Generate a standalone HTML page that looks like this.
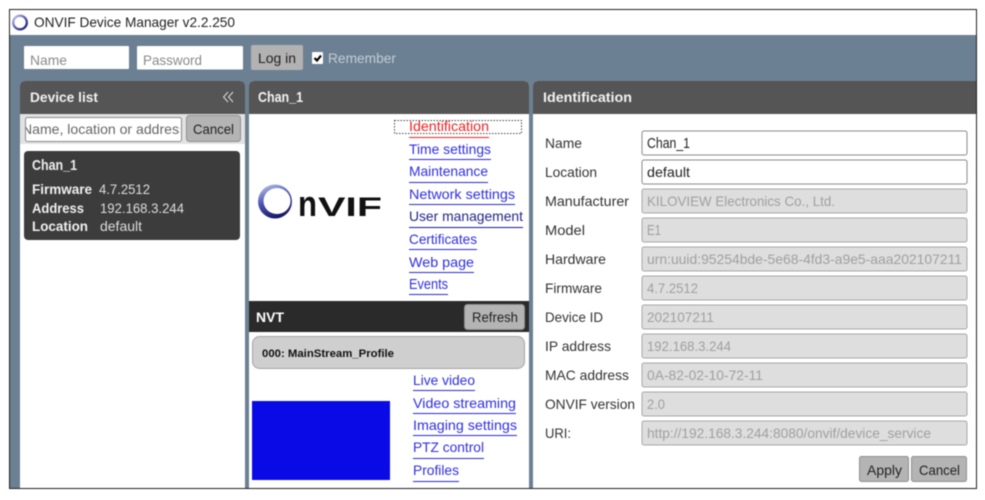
<!DOCTYPE html>
<html><head><meta charset="utf-8"><title>ONVIF Device Manager</title>
<style>
html,body{margin:0;padding:0;background:#fff;width:985px;height:500px;overflow:hidden}
svg{display:block;position:absolute;left:0;top:0;filter:blur(.45px)}
text{font-family:"Liberation Sans",sans-serif;font-size:14px;white-space:pre}
.b{font-weight:bold}
.lk{fill:#2f2fe0}
.lb{fill:#333}
.v{fill:#a0a0a0}
.in{fill:#fff;stroke:#8a8a8a}
.dis{fill:#dedede;stroke:#a8a8a8}
.btn{fill:#b4b4b4;stroke:#8f8f8f}
</style></head><body>
<svg width="985" height="500" viewBox="0 0 985 500" xmlns="http://www.w3.org/2000/svg">
<defs>
<linearGradient id="ring" x1="0" y1="0" x2="1" y2="1"><stop offset="0" stop-color="#c9cde8"/><stop offset=".5" stop-color="#5a5fb0"/><stop offset="1" stop-color="#1a1a70"/></linearGradient>
<linearGradient id="logo" x1=".2" y1="0" x2=".6" y2="1"><stop offset="0" stop-color="#b9bfe6"/><stop offset=".45" stop-color="#4a55b5"/><stop offset="1" stop-color="#14145e"/></linearGradient>
<clipPath id="ph"><rect x="26" y="118" width="154" height="23"/></clipPath>
</defs>
<rect width="985" height="500" fill="#fff"/>
<rect x="9.5" y="9.5" width="967" height="479" fill="#fff" stroke="#222"/>
<rect x="10" y="35" width="967" height="453" fill="#6c8093"/>
<circle cx="20" cy="22.5" r="6.8" fill="#fff" stroke="url(#ring)" stroke-width="2.4"/>
<text x="34" y="27" textLength="201" lengthAdjust="spacingAndGlyphs" fill="#222">ONVIF Device Manager v2.2.250</text>

<rect x="24" y="46" width="105" height="23" fill="#fff" rx="1"/>
<rect x="137" y="46" width="106" height="23.500" fill="#fff" rx="1"/>
<text x="30" y="65" textLength="37" lengthAdjust="spacingAndGlyphs" fill="#8a8a8a">Name</text>
<text x="143" y="65" textLength="59" lengthAdjust="spacingAndGlyphs" fill="#8a8a8a">Password</text>
<rect x="251" y="45" width="52" height="25" rx="2" fill="#b2b2b2"/>
<text x="258" y="63" textLength="38" lengthAdjust="spacingAndGlyphs" fill="#222">Log in</text>
<rect x="312" y="52" width="11" height="12" rx="1" fill="#fff"/>
<path d="M314.500 58l2.500 2.500 4-5" fill="none" stroke="#000" stroke-width="2.200"/>
<text x="328" y="63" textLength="68" lengthAdjust="spacingAndGlyphs" fill="#c3ccd4">Remember</text>

<!-- device list -->
<path d="M20 488V86q0-5 5-5h215q5 0 5 5v402z" fill="#fff"/>
<path d="M20 114V86q0-5 5-5h215q5 0 5 5v28z" fill="#555"/>
<rect x="20" y="114" width="225" height="30" fill="#e2e2e2"/>
<text x="30" y="102" class="b" textLength="68" lengthAdjust="spacingAndGlyphs" fill="#f2f2f2">Device list</text>
<path d="M228 92l-4.500 5 4.500 5M233 92l-4.500 5 4.500 5" fill="none" stroke="#ddd" stroke-width="1"/>
<rect x="25.500" y="117.500" width="156" height="24" rx="2" class="in"/>
<g clip-path="url(#ph)"><text x="22" y="134" textLength="164" lengthAdjust="spacingAndGlyphs" fill="#666">Name, location or address</text></g>
<rect x="186.500" y="115.500" width="54" height="26" rx="3" class="btn"/>
<text x="193" y="134" textLength="41" lengthAdjust="spacingAndGlyphs" fill="#222">Cancel</text>
<rect x="24" y="151" width="216" height="89" rx="4" fill="#3c3c3c"/>
<text x="32" y="170" class="b" textLength="45" lengthAdjust="spacingAndGlyphs" fill="#eee" style="font-size:15px">Chan_1</text>
<text x="32" y="194" class="b" textLength="60" lengthAdjust="spacingAndGlyphs" fill="#f0f0f0">Firmware</text>
<text x="99" y="194" textLength="51" lengthAdjust="spacingAndGlyphs" fill="#ddd">4.7.2512</text>
<text x="32" y="213" class="b" textLength="52" lengthAdjust="spacingAndGlyphs" fill="#f0f0f0">Address</text>
<text x="100" y="213" textLength="84" lengthAdjust="spacingAndGlyphs" fill="#ddd">192.168.3.244</text>
<text x="32" y="231" class="b" textLength="56" lengthAdjust="spacingAndGlyphs" fill="#f0f0f0">Location</text>
<text x="100" y="231" textLength="42" lengthAdjust="spacingAndGlyphs" fill="#ddd">default</text>

<!-- center -->
<path d="M249 488V86q0-5 5-5h270q5 0 5 5v402z" fill="#fff"/>
<path d="M249 114V86q0-5 5-5h270q5 0 5 5v28z" fill="#555"/>
<text x="258" y="102" class="b" textLength="45" lengthAdjust="spacingAndGlyphs" fill="#f2f2f2" style="font-size:15px">Chan_1</text>
<rect x="394.500" y="120.500" width="127" height="13" fill="none" stroke="#444" stroke-dasharray="1.500 1.500"/>
<text x="409" y="131" textLength="80" lengthAdjust="spacingAndGlyphs" fill="#ee2222">Identification</text>
<rect x="409" y="137" width="80" height="1" fill="#ee2222"/>
<text x="409" y="154" textLength="82" lengthAdjust="spacingAndGlyphs" class="lk">Time settings</text>
<rect x="409" y="159" width="82" height="1" fill="#2a2ad0"/>
<text x="409" y="176" textLength="79" lengthAdjust="spacingAndGlyphs" class="lk">Maintenance</text>
<rect x="409" y="182" width="79" height="1" fill="#2a2ad0"/>
<text x="409" y="199" textLength="106" lengthAdjust="spacingAndGlyphs" class="lk">Network settings</text>
<rect x="409" y="204" width="106" height="1" fill="#2a2ad0"/>
<text x="409" y="221" textLength="114" lengthAdjust="spacingAndGlyphs" fill="#25258a">User management</text>
<rect x="409" y="227" width="114" height="1" fill="#1a1a90"/>
<text x="409" y="244" textLength="68" lengthAdjust="spacingAndGlyphs" class="lk">Certificates</text>
<rect x="409" y="249" width="68" height="1" fill="#2a2ad0"/>
<text x="409" y="267" textLength="65" lengthAdjust="spacingAndGlyphs" class="lk">Web page</text>
<rect x="409" y="272" width="65" height="1" fill="#2a2ad0"/>
<text x="409" y="289" textLength="39" lengthAdjust="spacingAndGlyphs" class="lk" style="font-size:15px">Events</text>
<rect x="409" y="294" width="39" height="1" fill="#2a2ad0"/>

<circle cx="275" cy="201.500" r="17" fill="url(#logo)"/>
<ellipse cx="277" cy="201" rx="13.500" ry="13" fill="#fff"/>
<text x="298" y="216" textLength="19" lengthAdjust="spacingAndGlyphs" class="b" style="font-size:36px" fill="#111">n</text>
<text x="318" y="216" textLength="64" lengthAdjust="spacingAndGlyphs" class="b" style="font-size:27px" fill="#111">VIF</text>

<rect x="249" y="301" width="280" height="31" fill="#2a2a2a"/>
<text x="256" y="322" class="b" textLength="28" lengthAdjust="spacingAndGlyphs" fill="#fff">NVT</text>
<rect x="464.500" y="304.500" width="60" height="25" rx="3" class="btn"/>
<text x="472" y="322" textLength="46" lengthAdjust="spacingAndGlyphs" fill="#222">Refresh</text>
<rect x="252.500" y="336.500" width="272" height="32" rx="7" fill="#cfcfcf" stroke="#a5a5a5"/>
<text x="262" y="357" class="b" textLength="132" lengthAdjust="spacingAndGlyphs" style="font-size:11px" fill="#111">000: MainStream_Profile</text>
<rect x="252" y="401" width="138" height="79" fill="#0a0ae6"/>
<text x="413" y="385" textLength="62" lengthAdjust="spacingAndGlyphs" class="lk">Live video</text>
<rect x="413" y="390" width="62" height="1" fill="#2a2ad0"/>
<text x="413" y="408" textLength="103" lengthAdjust="spacingAndGlyphs" class="lk">Video streaming</text>
<rect x="413" y="413" width="103" height="1" fill="#2a2ad0"/>
<text x="413" y="430" textLength="104" lengthAdjust="spacingAndGlyphs" class="lk">Imaging settings</text>
<rect x="413" y="435" width="104" height="1" fill="#2a2ad0"/>
<text x="413" y="452" textLength="71" lengthAdjust="spacingAndGlyphs" class="lk">PTZ control</text>
<rect x="413" y="458" width="71" height="1" fill="#2a2ad0"/>
<text x="413" y="475" textLength="46" lengthAdjust="spacingAndGlyphs" class="lk">Profiles</text>
<rect x="413" y="481" width="46" height="1" fill="#2a2ad0"/>

<!-- right -->
<path d="M533 488V86q0-5 5-5h439v407z" fill="#fff"/>
<path d="M533 114V86q0-5 5-5h439v33z" fill="#555"/>
<text x="543" y="102" class="b" textLength="89" lengthAdjust="spacingAndGlyphs" fill="#f2f2f2">Identification</text>

<rect x="642" y="131" width="325" height="24" rx="2" class="in"/>
<rect x="642" y="160" width="325" height="24" rx="2" class="in"/>
<rect x="642" y="189" width="325" height="24" rx="2" class="dis"/>
<rect x="642" y="218" width="325" height="24" rx="2" class="dis"/>
<rect x="642" y="247" width="325" height="24" rx="2" class="dis"/>
<rect x="642" y="276" width="325" height="24" rx="2" class="dis"/>
<rect x="642" y="305" width="325" height="24" rx="2" class="dis"/>
<rect x="642" y="334" width="325" height="24" rx="2" class="dis"/>
<rect x="642" y="363" width="325" height="24" rx="2" class="dis"/>
<rect x="642" y="392" width="325" height="24" rx="2" class="dis"/>
<rect x="642" y="421" width="325" height="24" rx="2" class="dis"/>

<text x="545" y="148" textLength="37" lengthAdjust="spacingAndGlyphs" class="lb">Name</text>
<text x="545" y="177" textLength="52" lengthAdjust="spacingAndGlyphs" class="lb">Location</text>
<text x="545" y="206" textLength="84" lengthAdjust="spacingAndGlyphs" class="lb">Manufacturer</text>
<text x="545" y="235" textLength="40" lengthAdjust="spacingAndGlyphs" class="lb">Model</text>
<text x="545" y="264" textLength="61" lengthAdjust="spacingAndGlyphs" class="lb">Hardware</text>
<text x="545" y="293" textLength="57" lengthAdjust="spacingAndGlyphs" class="lb">Firmware</text>
<text x="545" y="322" textLength="58" lengthAdjust="spacingAndGlyphs" class="lb">Device ID</text>
<text x="545" y="351" textLength="66" lengthAdjust="spacingAndGlyphs" class="lb">IP address</text>
<text x="545" y="380" textLength="84" lengthAdjust="spacingAndGlyphs" class="lb">MAC address</text>
<text x="545" y="409" textLength="90" lengthAdjust="spacingAndGlyphs" class="lb">ONVIF version</text>
<text x="545" y="438" textLength="26" lengthAdjust="spacingAndGlyphs" class="lb">URI:</text>

<text x="647" y="148" textLength="43" lengthAdjust="spacingAndGlyphs" fill="#222" style="font-size:15px">Chan_1</text>
<text x="647" y="177" textLength="43" lengthAdjust="spacingAndGlyphs" fill="#222">default</text>
<text x="647" y="206" textLength="188" lengthAdjust="spacingAndGlyphs" class="v">KILOVIEW Electronics Co., Ltd.</text>
<text x="647" y="235" textLength="14" lengthAdjust="spacingAndGlyphs" class="v" style="font-size:15px">E1</text>
<text x="647" y="264" textLength="315" lengthAdjust="spacingAndGlyphs" class="v">urn:uuid:95254bde-5e68-4fd3-a9e5-aaa202107211</text>
<text x="647" y="293" textLength="51" lengthAdjust="spacingAndGlyphs" class="v">4.7.2512</text>
<text x="647" y="322" textLength="67" lengthAdjust="spacingAndGlyphs" class="v">202107211</text>
<text x="647" y="351" textLength="84" lengthAdjust="spacingAndGlyphs" class="v">192.168.3.244</text>
<text x="647" y="380" textLength="116" lengthAdjust="spacingAndGlyphs" class="v">0A-82-02-10-72-11</text>
<text x="647" y="409" textLength="18" lengthAdjust="spacingAndGlyphs" class="v">2.0</text>
<text x="647" y="438" textLength="284" lengthAdjust="spacingAndGlyphs" class="v">http://192.168.3.244:8080/onvif/device_service</text>

<rect x="859.500" y="456.500" width="49" height="25" rx="2" class="btn"/>
<text x="867" y="475" textLength="35" lengthAdjust="spacingAndGlyphs" fill="#222">Apply</text>
<rect x="911.500" y="456.500" width="55" height="25" rx="2" class="btn"/>
<text x="919" y="475" textLength="41" lengthAdjust="spacingAndGlyphs" fill="#222">Cancel</text>

<rect x="9" y="488" width="968" height="1" fill="#222"/>
<rect x="976" y="9" width="1" height="480" fill="#222"/>
</svg>
</body></html>
